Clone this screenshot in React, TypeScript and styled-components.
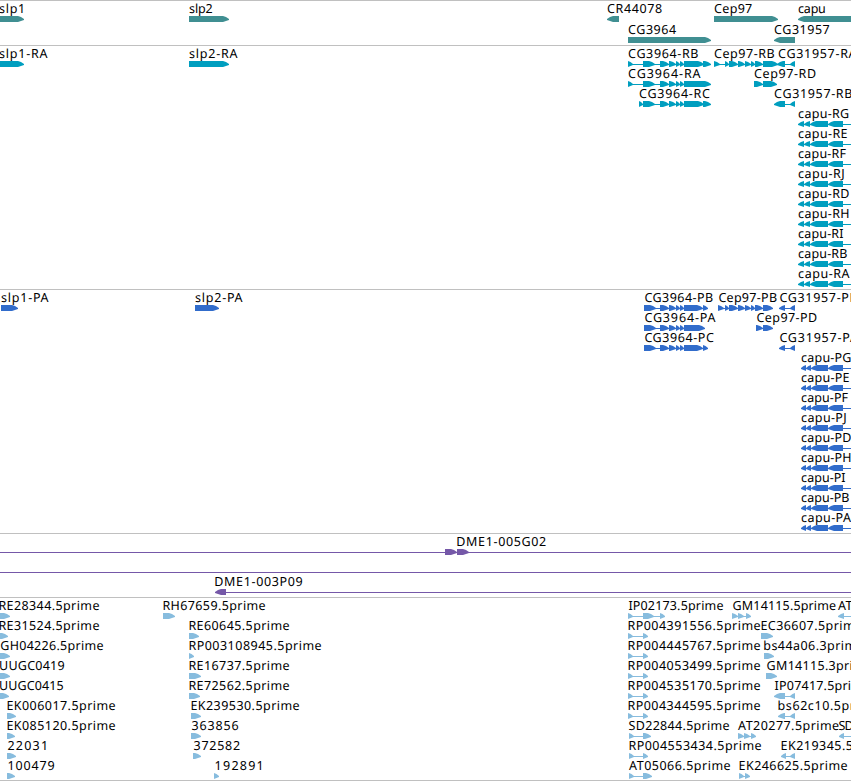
import React from "react";
import styled, { createGlobalStyle } from "styled-components";

const FONT = '12.5px "Noto Sans", "Open Sans", sans-serif';
const VIEW_WIDTH = 851;

type Span = [number, number];
type Feature = {
  label?: string;
  // left and right edge of the label
  text?: Span;
  exons: Span[];
  reverse?: boolean;
  // extent of the intron line, when it reaches past the exons
  line?: Span;
};

const f = (label: string, text: Span, exons: Span[], reverse = false, line?: Span): Feature => ({
  label,
  text,
  exons,
  reverse,
  line,
});

const GlobalStyle = createGlobalStyle`
  html, body {
    margin: 0;
    background: #fff;
    overflow: hidden;
  }
`;

const Browser = styled.main`
  display: flex;
  flex-direction: column;
  width: ${VIEW_WIDTH}px;
  height: 781px;
  overflow: hidden;
  background: #fff;
`;

const TrackPanel = styled.section<{ $color: string; $pad: number }>`
  display: flex;
  flex-direction: column;
  flex: none;
  border-top: 1px solid #c0c0c0;
  padding-bottom: ${(p) => p.$pad}px;
  color: ${(p) => p.$color};
`;

const Row = styled.div<{ $height: number }>`
  position: relative;
  flex: none;
  height: ${(p) => p.$height}px;
`;

const Label = styled.span`
  position: absolute;
  top: -1px;
  color: #000;
  font: ${FONT};
  line-height: 18px;
  white-space: pre;
  text-rendering: geometricPrecision;
`;

const Glyph = styled.svg`
  position: absolute;
  top: 15px;
  display: block;
  height: 6px;
  overflow: hidden;
  fill: currentColor;
`;

const BottomRule = styled.div`
  flex: none;
  height: 1px;
  background: #c0c0c0;
`;

const ctx = document.createElement("canvas").getContext("2d")!;

function fitLabel(label: string, [start, end]: Span) {
  ctx.font = FONT;
  const m = ctx.measureText(label);
  const ink = m.actualBoundingBoxLeft + m.actualBoundingBoxRight;
  return {
    left: start - 0.4 + m.actualBoundingBoxLeft,
    letterSpacing: (end - start - ink) / Math.max(1, label.length - 1),
  };
}

function arrow(a: number, b: number, reverse?: boolean) {
  const head = Math.min(6, b - a);
  return reverse
    ? `${b},0 ${a + head},0 ${a + head / 2},1 ${a},3 ${a},4 ${a + head / 2},5 ${a + head},6 ${b},6`
    : `${a},0 ${b - head},0 ${b - head / 2},1 ${b},3 ${b},4 ${b - head / 2},5 ${b - head},6 ${a},6`;
}

function FeatureView({ feature }: { feature: Feature }) {
  const { label, text, exons, reverse, line } = feature;
  const edges = [...exons.flat(), ...(line ?? [])];
  const left = Math.min(...edges);
  const width = Math.max(...edges) - left;
  return (
    <>
      {label && text && <Label style={fitLabel(label, text)}>{label}</Label>}
      <Glyph width={width} viewBox={`0 0 ${width} 6`} style={{ left }}>
        {(exons.length > 1 || line) && <rect x={0} y={3} width={line ? width : width - 2} height={1} />}
        {exons.map(([a, b]) => (
          <polygon key={a} points={arrow(a - left, b - left, reverse)} />
        ))}
      </Glyph>
    </>
  );
}

function Track(props: { color: string; rows: Feature[][]; rowHeight?: number; pad?: number }) {
  const { color, rows, rowHeight = 20, pad = 3 } = props;
  return (
    <TrackPanel $color={color} $pad={pad}>
      {rows.map((row, i) => (
        <Row key={i} $height={rowHeight}>
          {row.map((feature, j) => (
            <FeatureView key={j} feature={feature} />
          ))}
        </Row>
      ))}
    </TrackPanel>
  );
}

const genes: Feature[][] = [
  [
    f("slp1", [-0.5, 23.5], [[-6, 24]]),
    f("slp2", [189.5, 213], [[189, 229]]),
    f("CR44078", [607.5, 662.3], [[607, 619]], true),
    f("Cep97", [714.5, 752.5], [[714, 778]]),
    f("capu", [798.5, 825.5], [[798, 860]], true),
  ],
  [f("CG3964", [628.5, 676.3], [[628, 711]]), f("CG31957", [774.5, 830], [[774, 795]], true)],
];

const core: Span[] = [[660, 669], [669, 676], [676, 680], [680, 684]];
const cepCore: Span[] = [[725, 729], [729, 738], [738, 745], [745, 751], [751, 755], [755, 763]];

const capuRow = (label: string, start: number, end: number, exons: Span[]): Feature[] => [
  f(label, [start, end], exons, true, [exons[0][0], VIEW_WIDTH]),
];
const capuR: Span[] = [[798, 804], [804, 810], [810, 828], [828, 843]];
const capuP: Span[] = [[801, 806], [806, 811], [811, 828], [828, 843]];

const transcripts: Feature[][] = [
  [
    f("slp1-RA", [-0.5, 48], [[-6, 24]]),
    f("slp2-RA", [189.5, 238], [[189, 229]]),
    f("CG3964-RB", [628.5, 698.7], [[628, 633], [643, 655], ...core, [684, 704], [703, 711]]),
    f("Cep97-RB", [714.5, 775], [[714, 720], ...cepCore, [763, 778]]),
    f("CG31957-RA", [778.5, 857], [[777, 785], [790, 795]], true),
  ],
  [
    f("CG3964-RA", [628.5, 701], [[628, 633], [643, 655], ...core, [684, 711]]),
    f("Cep97-RD", [754.5, 816.3], [[754, 763], [763, 777]]),
  ],
  [
    f("CG3964-RC", [639.5, 710.5], [[639, 643], [643, 655], ...core, [684, 704], [703, 711]]),
    f("CG31957-RB", [774.5, 852.7], [[774, 785], [790, 795]], true),
  ],
  ...([["G", 849.5], ["E", 848], ["F", 847], ["J", 844.7], ["D", 849.7], ["H", 849.7], ["I", 843.7], ["B", 847.7], ["A", 850]] as [string, number][]).map(
    ([s, end]) => capuRow(`capu-R${s}`, 798.5, end, capuR),
  ),
];

const proteins: Feature[][] = [
  [
    f("slp1-PA", [1.5, 49], [[1, 18]]),
    f("slp2-PA", [195.5, 243], [[195, 219]]),
    f("CG3964-PB", [644.8, 713.5], [[644, 656], ...core, [684, 703], [703, 708]]),
    f("Cep97-PB", [718.8, 777.3], [[718, 724], ...cepCore, [763, 773]]),
    f("CG31957-PB", [779.8, 858], [[779, 785], [790, 795]], true),
  ],
  [
    f("CG3964-PA", [644.8, 716], [[644, 656], ...core, [684, 705]]),
    f("Cep97-PD", [756.8, 817.5], [[756, 763], [763, 773]]),
  ],
  [
    f("CG3964-PC", [644.8, 714.3], [[644, 656], ...core, [684, 703], [703, 708]]),
    f("CG31957-PA", [779.8, 858.5], [[779, 785], [790, 795]], true),
  ],
  ...([["G", 851.7], ["E", 850], ["F", 849], ["J", 846.7], ["D", 851.7], ["H", 851.7], ["I", 845.7], ["B", 849.7], ["A", 851.3]] as [string, number][]).map(
    ([s, end]) => capuRow(`capu-P${s}`, 801.5, end, capuP),
  ),
];

const bacs: Feature[][] = [
  [f("DME1-005G02", [457.7, 546.5], [[445, 457], [457, 469]], false, [0, VIEW_WIDTH])],
  [{ exons: [], line: [0, VIEW_WIDTH] }],
  [f("DME1-003P09", [215.7, 303], [[215, 226]], true, [215, VIEW_WIDTH])],
];

const rp: Span[] = [[628, 633], [643, 648]];

const ests: Feature[][] = [
  [
    f("RE28344.5prime", [-0.2, 99.8], [[0, 10]]),
    f("RH67659.5prime", [163.8, 266], [[163, 175]]),
    f("IP02173.5prime", [628.8, 723.8], [[628, 633], [643, 654], [660, 665]]),
    f("GM14115.5prime", [733, 836.5], [[732, 738], [738, 744], [746, 751]]),
    f("AT", [838.3, 853], [[838, 844]], true, [838, VIEW_WIDTH]),
  ],
  [
    f("RE31524.5prime", [-0.2, 99.8], [[0, 8]]),
    f("RE60645.5prime", [189.8, 290], [[189, 199]]),
    f("RP004391556.5prime", [628.8, 761], rp),
    f("EC36607.5prime", [761.8, 862.5], [[761, 773]]),
  ],
  [
    f("GH04226.5prime", [0.7, 103.8], [[0, 10]]),
    f("RP003108945.5prime", [189.8, 322], [[189, 194]]),
    f("RP004445767.5prime", [628.8, 761], rp),
    f("bs44a06.3prime", [764.7, 864], [[764, 774]]),
  ],
  [
    f("UUGC0419", [0.5, 64.8], [[0, 10]]),
    f("RE16737.5prime", [189.8, 290], [[189, 201]]),
    f("RP004053499.5prime", [628.8, 761], rp),
    f("GM14115.3prime", [767, 872.5], [[766, 777]]),
  ],
  [
    f("UUGC0415", [0.5, 63.8], [[0, 9]]),
    f("RE72562.5prime", [189.8, 290], [[189, 200]]),
    f("RP004535170.5prime", [628.8, 761], rp),
    f("IP07417.5prime", [775, 870.5], [[774, 785], [790, 795]], true),
  ],
  [
    f("EK006017.5prime", [7.8, 116], [[7, 16]]),
    f("EK239530.5prime", [191.8, 300], [[191, 201]]),
    f("RP004344595.5prime", [628.8, 761], rp),
    f("bs62c10.5prime", [779, 879], [[778, 785], [790, 795]], true),
  ],
  [
    f("EK085120.5prime", [7.8, 116], [[7, 15]]),
    f("363856", [191.8, 239], [[191, 201]]),
    f("SD22844.5prime", [629, 730], [[629, 634], [643, 651]]),
    f("AT20277.5prime", [738.5, 839.5], [[738, 744], [744, 750], [751, 756]]),
    f("SD", [838.8, 854], [[839, 844]], true, [839, VIEW_WIDTH]),
  ],
  [
    f("22031", [7.8, 46.4], [[7, 16]]),
    f("372582", [194, 240.4], [[193, 201]]),
    f("RP004553434.5prime", [629.8, 762], [[629, 634], [643, 648]]),
    f("EK219345.5prime", [782, 890.5], [[781, 786], [790, 795]], true),
  ],
  [
    f("100479", [9, 55], [[7, 15]]),
    f("192891", [216, 262], [[214, 219]]),
    f("AT05066.5prime", [629.5, 731], [[629, 634], [643, 652]]),
    f("EK246625.5prime", [740, 848], [[739, 744], [745, 750]]),
  ],
];

export default function App() {
  return (
    <Browser>
      <GlobalStyle />
      <Track color="#408f92" rows={genes} rowHeight={21} pad={2} />
      <Track color="#009ebf" rows={transcripts} />
      <Track color="#316ccb" rows={proteins} />
      <Track color="#7558a8" rows={bacs} />
      <Track color="#87bcde" rows={ests} pad={2} />
      <BottomRule />
    </Browser>
  );
}
